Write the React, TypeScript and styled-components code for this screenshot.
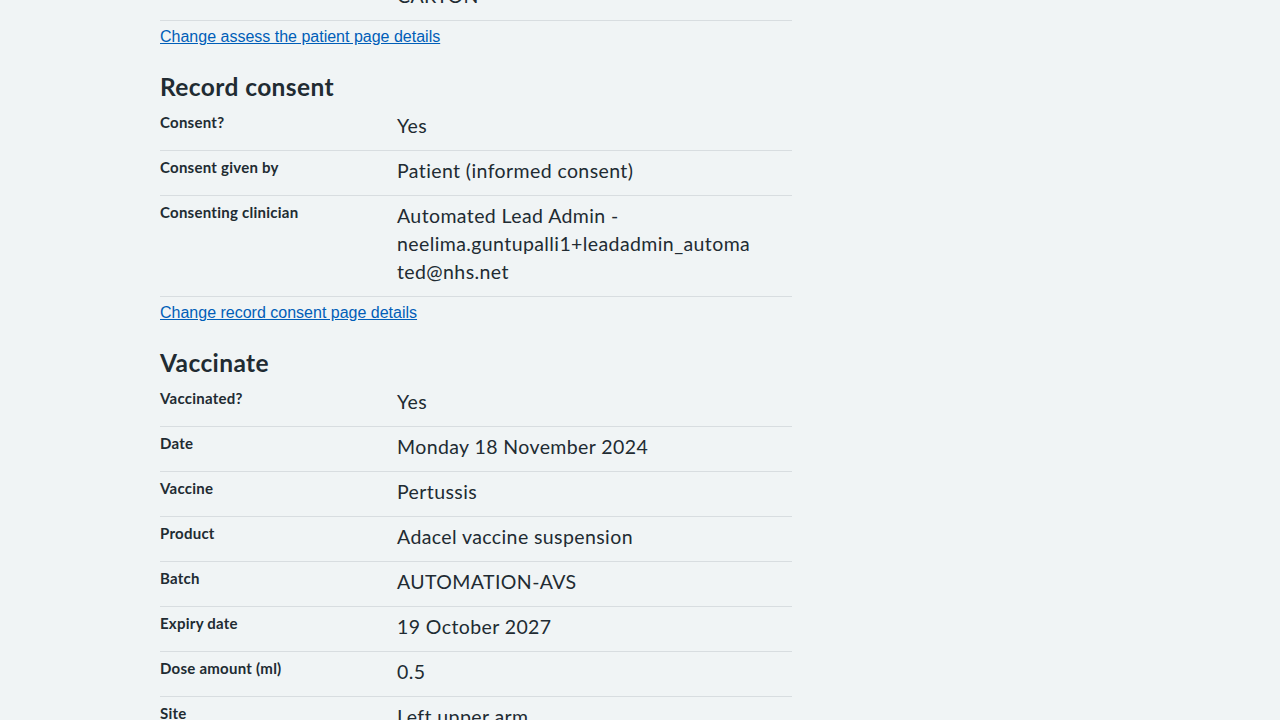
import React from "react";
import styled, { createGlobalStyle } from "styled-components";

const GlobalStyle = createGlobalStyle`
  html, body {
    margin: 0;
    padding: 0;
    background: #f0f4f5;
    color: #212b32;
    font-family: Lato, "Noto Sans", sans-serif;
  }
`;

const Container = styled.div`
  width: 960px;
  margin: -24px auto 0;
`;

const Column = styled.main`
  width: 632px;
`;

const SectionHeading = styled.h2`
  font-size: 24.5px;
  line-height: 32px;
  font-weight: 700;
  letter-spacing: 0.4px;
  margin: 22px 0 3px;
  color: #212b32;
`;

const SummaryList = styled.dl`
  margin: 0;
`;

const Row = styled.div`
  display: grid;
  grid-template-columns: 237px 1fr;
  border-bottom: 1px solid #d8dde0;
`;

const Key = styled.dt`
  font-size: 15px;
  line-height: 20px;
  font-weight: 700;
  letter-spacing: 0.25px;
  padding: 6px 16px 8px 0;
`;

const Value = styled.dd`
  margin: 0;
  font-size: 19.5px;
  line-height: 28px;
  letter-spacing: 0.4px;
  padding: 6px 40px 10px 0;
  overflow-wrap: anywhere;
`;

const ChangeLink = styled.a`
  display: block;
  width: fit-content;
  margin-top: 4px;
  font-family: "Liberation Sans", Arial, sans-serif;
  font-size: 16px;
  line-height: 24px;
  color: #005eb8;
  text-decoration: underline;
`;

type Item = [string, string];

const List = ({ items }: { items: Item[] }) => (
  <SummaryList>
    {items.map(([k, v], i) => (
      <Row key={i}>
        <Key>{k}</Key>
        <Value>{v}</Value>
      </Row>
    ))}
  </SummaryList>
);

export default function App() {
  return (
    <>
      <GlobalStyle />
      <Container>
        <Column>
          <List items={[["", "CARTON"]]} />
          <ChangeLink href="#">Change assess the patient page details</ChangeLink>

          <SectionHeading>Record consent</SectionHeading>
          <List
            items={[
              ["Consent?", "Yes"],
              ["Consent given by", "Patient (informed consent)"],
              [
                "Consenting clinician",
                "Automated Lead Admin - neelima.guntupalli1+leadadmin_automated@nhs.net",
              ],
            ]}
          />
          <ChangeLink href="#">Change record consent page details</ChangeLink>

          <SectionHeading>Vaccinate</SectionHeading>
          <List
            items={[
              ["Vaccinated?", "Yes"],
              ["Date", "Monday 18 November 2024"],
              ["Vaccine", "Pertussis"],
              ["Product", "Adacel vaccine suspension"],
              ["Batch", "AUTOMATION-AVS"],
              ["Expiry date", "19 October 2027"],
              ["Dose amount (ml)", "0.5"],
              ["Site", "Left upper arm"],
            ]}
          />
        </Column>
      </Container>
    </>
  );
}
